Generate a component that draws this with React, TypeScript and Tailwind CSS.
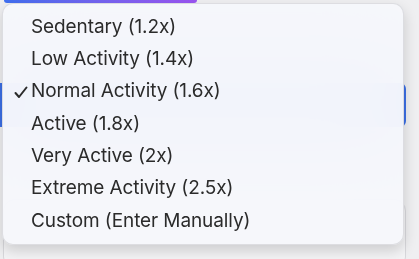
import React from 'react';

const options = [
  'Sedentary (1.2x)',
  'Low Activity (1.4x)',
  'Normal Activity (1.6x)',
  'Active (1.8x)',
  'Very Active (2x)',
  'Extreme Activity (2.5x)',
  'Custom (Enter Manually)',
];

const selected = 'Normal Activity (1.6x)';

export default function App() {
  return (
    <div className="relative w-[419px] h-[259px] overflow-hidden bg-[#efeff1]" style={{ fontFamily: 'Inter, "Liberation Sans", sans-serif' }}>
      {/* page behind the popup */}
      <div className="flex flex-col w-[406px]">
        <div className="h-[3px] w-[193px] ml-[4px] rounded-b-full bg-gradient-to-r from-[#3f6ff0] to-[#9b55f2]" />
        <div className="mt-[6px] mx-[4px] h-[70px] rounded-[12px] bg-[#e2ecfd]" />
        <div className="mt-[4px] h-[44px] rounded-r-[6px] bg-[#3b6fe6]" />
        <div className="mt-[4px] mx-[4px] h-[12px] rounded-[10px] bg-[#e4eefd]" />
        <div className="mt-[56px] ml-[3px] h-[70px] rounded-[12px] border border-[#d8d8dc] bg-[#f4f4f6]" />
      </div>

      {/* native select popup */}
      <div className="absolute left-[2px] top-[3px] w-[402px] rounded-[11px] border border-black/10 bg-[#f6f7fb]/[0.96] backdrop-blur-2xl shadow-[0_6px_14px_rgba(0,0,0,0.16)] py-[7px]">
        {options.map((opt) => (
          <div key={opt} className="relative flex items-center h-[32.3px] pl-[28px] text-[19px] text-[#2b2b2b] tracking-[-0.1px]">
            {opt === selected && (
              <svg className="absolute left-[11px] top-[10px]" width="14" height="13" viewBox="0 0 14 13">
                <polyline points="1.5,7 5,11 12.5,1.5" fill="none" stroke="#2b2b2b" strokeWidth="2" strokeLinecap="round" strokeLinejoin="round" />
              </svg>
            )}
            {opt}
          </div>
        ))}
      </div>
    </div>
  );
}
